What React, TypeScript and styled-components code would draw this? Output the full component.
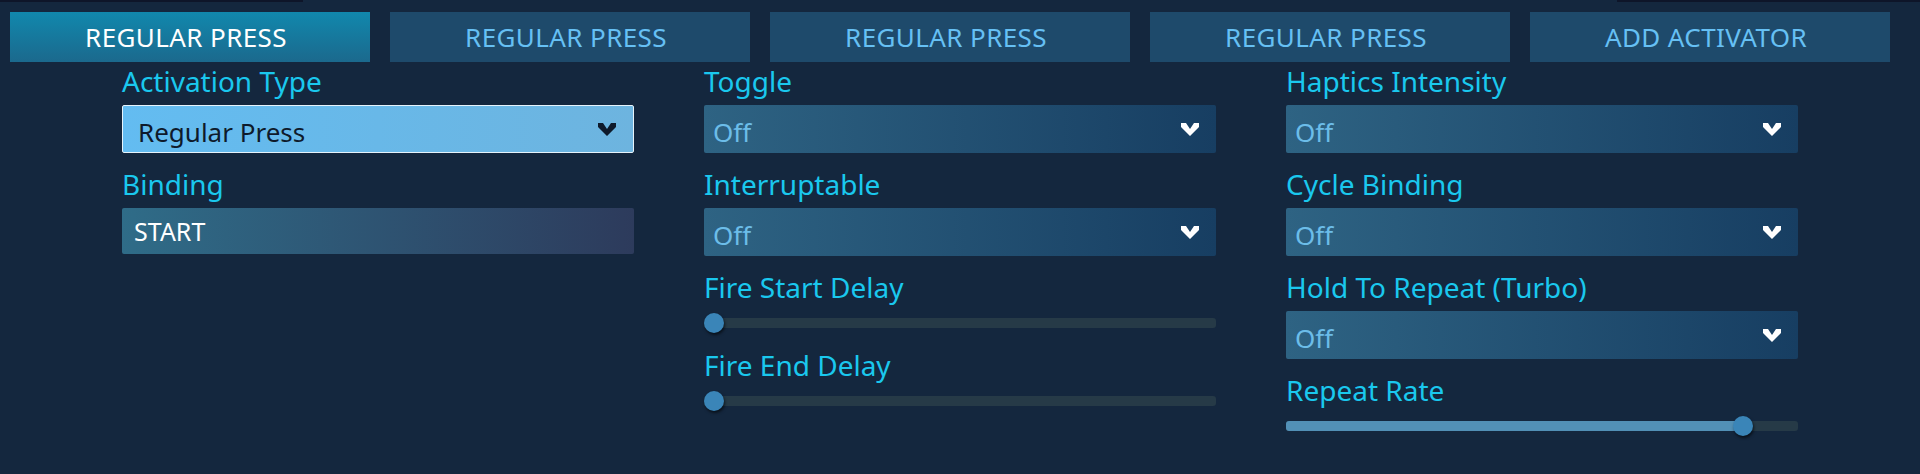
import React from "react";
import styled, { createGlobalStyle } from "styled-components";

const GlobalStyle = createGlobalStyle`
  html, body {
    margin: 0;
    padding: 0;
    background: #14273e;
  }
  body {
    font-family: "Noto Sans", "Open Sans", sans-serif;
  }
`;

const Page = styled.div`
  width: 1920px;
  height: 474px;
  background: #14273e;
  overflow: hidden;
`;

const ScrollStrip = styled.div`
  height: 2px;
  display: flex;
  justify-content: space-between;
`;

const StripEnd = styled.div`
  width: 303px;
  background: #0e1529;
`;

const TabBar = styled.div`
  display: flex;
  gap: 20px;
  padding: 10px 30px 0 10px;
`;

const Tab = styled.div<{ $active?: boolean }>`
  width: 360px;
  height: 50px;
  line-height: 50px;
  text-align: center;
  font-size: 26px;
  letter-spacing: 0.4px;
  padding-right: 8px;
  box-sizing: border-box;
  background: ${(p) => (p.$active ? "linear-gradient(#1188ad, #1b698d)" : "#1e4a6b")};
  color: ${(p) => (p.$active ? "#ffffff" : "#66c0f4")};
`;

const Columns = styled.div`
  display: grid;
  grid-template-columns: repeat(3, 512px);
  column-gap: 70px;
  padding-left: 122px;
`;

const Column = styled.div`
  display: flex;
  flex-direction: column;
`;

const Field = styled.div<{ $slider?: boolean }>`
  margin-bottom: ${(p) => (p.$slider ? 6 : 12)}px;
`;

const Label = styled.div`
  font-size: 28px;
  line-height: 38px;
  color: #1ac8ee;
  white-space: nowrap;
`;

const SelectBox = styled.div<{ $focused?: boolean }>`
  margin-top: 5px;
  height: 48px;
  box-sizing: border-box;
  display: flex;
  align-items: center;
  justify-content: space-between;
  padding: 0 17px 0 ${(p) => (p.$focused ? 15 : 9)}px;
  border-radius: 2px;
  background: ${(p) =>
    p.$focused
      ? "linear-gradient(to right, #63bcf1, #6db4df)"
      : "linear-gradient(to right, #2e6383, #173e62)"};
  border: ${(p) => (p.$focused ? "1px solid #e6f3fb" : "none")};
  color: ${(p) => (p.$focused ? "#0e1a2b" : "#6cbde9")};
`;

const SelectValue = styled.div`
  font-size: 26px;
  line-height: 34px;
  padding-top: 6px;
  white-space: nowrap;
`;

const Chevron = styled.svg`
  width: 18px;
  height: 13px;
  flex: none;
`;

const BindingBox = styled.div`
  margin-top: 5px;
  height: 46px;
  line-height: 46px;
  padding-left: 12px;
  font-size: 25px;
  color: #ffffff;
  border-radius: 2px;
  background: linear-gradient(to right, #2f6c88, #2d3b5c);
`;

const SliderRow = styled.div`
  height: 34px;
  display: flex;
  align-items: center;
`;

const Track = styled.div`
  position: relative;
  width: 100%;
  height: 10px;
  border-radius: 3px;
  background: #263a47;
`;

const Fill = styled.div`
  height: 100%;
  border-radius: 3px 0 0 3px;
  background: #5290b6;
`;

const Thumb = styled.div`
  position: absolute;
  top: 50%;
  width: 20px;
  height: 20px;
  border-radius: 50%;
  background: #3a85b8;
  transform: translate(-50%, -50%);
  box-shadow: 1px 2px 3px rgba(0, 0, 0, 0.6);
`;

const ChevronIcon = ({ color }: { color: string }) => (
  <Chevron viewBox="0 0 18 13">
    <polygon points="0,0 5,0 9,6 13,0 18,0 18,4 9,13 0,4" fill={color} />
  </Chevron>
);

const Select = ({ label, value, focused }: { label: string; value: string; focused?: boolean }) => (
  <Field>
    <Label>{label}</Label>
    <SelectBox $focused={focused}>
      <SelectValue>{value}</SelectValue>
      <ChevronIcon color={focused ? "#0e1a2b" : "#ffffff"} />
    </SelectBox>
  </Field>
);

const Slider = ({ label, value }: { label: string; value: number }) => {
  const width = 512;
  const pos = 10 + value * (width - 20);
  return (
    <Field $slider>
      <Label>{label}</Label>
      <SliderRow>
        <Track>
          {value > 0 && <Fill style={{ width: pos }} />}
          <Thumb style={{ left: pos }} />
        </Track>
      </SliderRow>
    </Field>
  );
};

const tabs = ["REGULAR PRESS", "REGULAR PRESS", "REGULAR PRESS", "REGULAR PRESS", "ADD ACTIVATOR"];

export default function App() {
  return (
    <Page>
      <GlobalStyle />
      <ScrollStrip>
        <StripEnd />
        <StripEnd />
      </ScrollStrip>
      <TabBar>
        {tabs.map((t, i) => (
          <Tab key={i} $active={i === 0}>
            {t}
          </Tab>
        ))}
      </TabBar>
      <Columns>
        <Column>
          <Select label="Activation Type" value="Regular Press" focused />
          <Field>
            <Label>Binding</Label>
            <BindingBox>START</BindingBox>
          </Field>
        </Column>
        <Column>
          <Select label="Toggle" value="Off" />
          <Select label="Interruptable" value="Off" />
          <Slider label="Fire Start Delay" value={0} />
          <Slider label="Fire End Delay" value={0} />
        </Column>
        <Column>
          <Select label="Haptics Intensity" value="Off" />
          <Select label="Cycle Binding" value="Off" />
          <Select label="Hold To Repeat (Turbo)" value="Off" />
          <Slider label="Repeat Rate" value={0.908} />
        </Column>
      </Columns>
    </Page>
  );
}
